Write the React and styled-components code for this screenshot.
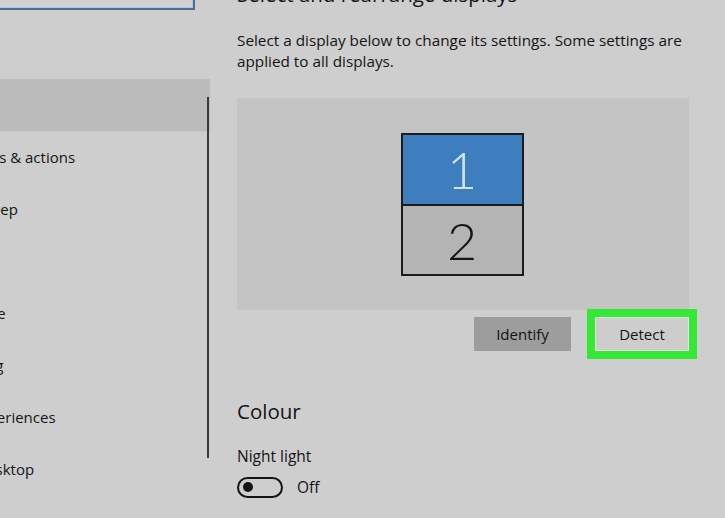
import React from "react";
import styled, { createGlobalStyle } from "styled-components";

const GlobalStyle = createGlobalStyle`
  html, body {
    margin: 0;
    padding: 0;
    background: #cecece;
  }
  body {
    font-family: "Open Sans", "Noto Sans", "Liberation Sans", sans-serif;
    color: #141414;
  }
`;

const navItems = [
  { label: "Display", active: true },
  { label: "Notifications & actions" },
  { label: "Power & sleep" },
  { label: "Storage" },
  { label: "Tablet mode" },
  { label: "Multitasking" },
  { label: "Shared experiences" },
  { label: "Remote Desktop" },
];

const App = () => {
  return (
    <>
      <GlobalStyle />
      <Window>
        <Sidebar>
          <SearchBox />
          <NavList>
            {navItems.map((item) => (
              <NavItem key={item.label} $active={item.active}>
                <NavLabel>{item.label}</NavLabel>
              </NavItem>
            ))}
          </NavList>
          <ScrollThumb />
        </Sidebar>

        <Content>
          <SectionTitle $cropped>Select and rearrange displays</SectionTitle>
          <Description>
            Select a display below to change its settings. Some settings are
            applied to all displays.
          </Description>

          <Preview>
            <MonitorStack>
              <Monitor $selected>1</Monitor>
              <Monitor>2</Monitor>
            </MonitorStack>
          </Preview>

          <ButtonRow>
            <Button $variant="dark">Identify</Button>
            <Button $highlight>Detect</Button>
          </ButtonRow>

          <SectionTitle>Colour</SectionTitle>
          <SettingLabel>Night light</SettingLabel>
          <ToggleRow>
            <Toggle>
              <Knob />
            </Toggle>
            <ToggleText>Off</ToggleText>
          </ToggleRow>
        </Content>
      </Window>
    </>
  );
};

const Window = styled.div`
  display: flex;
  width: 725px;
  height: 518px;
  overflow: hidden;
  background: #cecece;
`;

const Sidebar = styled.aside`
  position: relative;
  flex: 0 0 210px;
  display: flex;
  flex-direction: column;
  overflow: hidden;
`;

const SearchBox = styled.div`
  margin: -26px 0 0 -20px;
  width: 211px;
  height: 32px;
  border: 2px solid #4b6e9b;
  box-shadow: inset 0 0 0 1px #b2c6de;
  background: #d2d2d2;
`;

const NavList = styled.nav`
  margin-top: 69px;
  display: flex;
  flex-direction: column;
`;

const NavItem = styled.div`
  height: 52px;
  display: flex;
  align-items: center;
  background: ${({ $active }) => ($active ? "#bbbbbb" : "transparent")};
`;

const NavLabel = styled.span`
  margin-left: -82px;
  font-size: 15px;
  white-space: nowrap;
`;

const ScrollThumb = styled.div`
  position: absolute;
  left: 207px;
  top: 97px;
  width: 2px;
  height: 361px;
  background: #3a3a3a;
`;

const Content = styled.main`
  flex: 1;
  padding-left: 27px;
  display: flex;
  flex-direction: column;
  align-items: flex-start;
`;

const SectionTitle = styled.h2`
  margin: ${({ $cropped }) => ($cropped ? "-20px 0 0" : "46px 0 0")};
  font-size: 20.5px;
  line-height: 28px;
  font-weight: 400;
`;

const Description = styled.p`
  margin: 22px 0 0;
  width: 456px;
  font-size: 15.3px;
  line-height: 21px;
`;

const Preview = styled.div`
  margin-top: 26px;
  width: 452px;
  height: 212px;
  background: #c4c4c4;
  display: flex;
  align-items: center;
  justify-content: center;
`;

const MonitorStack = styled.div`
  width: 119px;
  border: 2px solid #1c1c1c;
  display: flex;
  flex-direction: column;
  margin-left: -2px;
`;

const Monitor = styled.div`
  height: ${({ $selected }) => ($selected ? "69px" : "68px")};
  display: flex;
  align-items: center;
  justify-content: center;
  font-family: "Lato", "Open Sans", sans-serif;
  font-size: 52px;
  font-weight: 300;
  line-height: 1;
  background: ${({ $selected }) => ($selected ? "#3e7ebe" : "#b4b4b4")};
  color: ${({ $selected }) => ($selected ? "#d3e5f5" : "#141414")};
  & + & {
    border-top: 2px solid #1c1c1c;
  }
`;

const ButtonRow = styled.div`
  margin-top: 7px;
  width: 452px;
  display: flex;
  justify-content: flex-end;
  align-items: center;
  gap: 24px;
`;

const Button = styled.button`
  height: 34px;
  width: ${({ $highlight }) => ($highlight ? "94px" : "97px")};
  border: ${({ $highlight }) => ($highlight ? "1px solid #e4e4e4" : "none")};
  background: ${({ $variant }) => ($variant === "dark" ? "#9d9d9d" : "#cdcdcd")};
  font-family: inherit;
  font-size: 15px;
  color: #141414;
  outline: ${({ $highlight }) => ($highlight ? "8px solid #34e834" : "none")};
  padding: 0;
`;

const SettingLabel = styled.div`
  margin-top: 21px;
  font-size: 15.5px;
  line-height: 21px;
`;

const ToggleRow = styled.div`
  margin-top: 9px;
  display: flex;
  align-items: center;
  gap: 14px;
`;

const Toggle = styled.div`
  box-sizing: border-box;
  width: 46px;
  height: 21px;
  border: 2px solid #141414;
  border-radius: 11px;
  display: flex;
  align-items: center;
  padding-left: 4px;
`;

const Knob = styled.span`
  width: 10px;
  height: 10px;
  border-radius: 50%;
  background: #141414;
`;

const ToggleText = styled.span`
  font-size: 15.5px;
`;

export default App;
